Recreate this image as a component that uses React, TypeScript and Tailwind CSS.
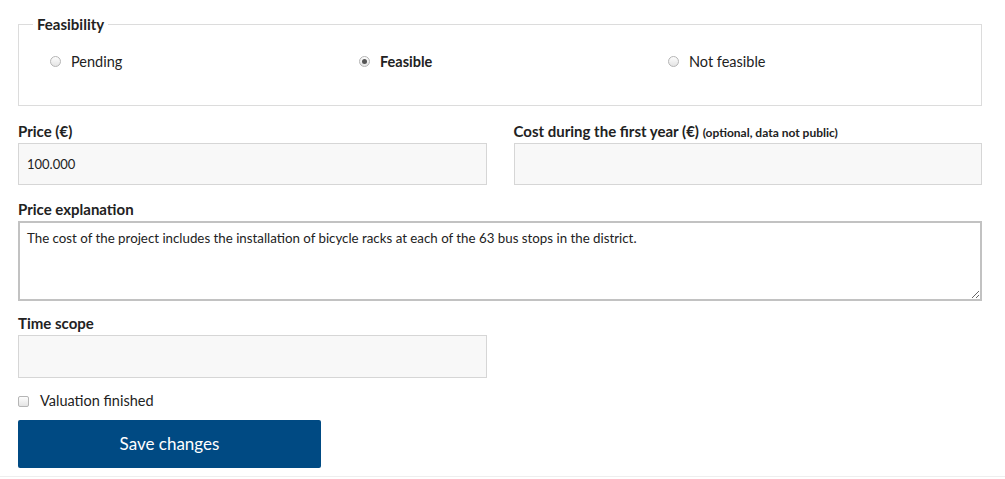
import React, { useState } from 'react';

const font = { fontFamily: 'Lato, "Open Sans", sans-serif' };

const Radio = ({ checked, label }: { checked?: boolean; label: string }) => (
  <label className="flex items-center gap-[10px] w-[309px]">
    <span className="w-[11px] h-[11px] rounded-full border border-[#b5b5b5] bg-gradient-to-b from-[#fdfdfd] to-[#e4e4e4] flex items-center justify-center">
      {checked && <span className="w-[5px] h-[5px] rounded-full bg-[#555]" />}
    </span>
    <span className={`text-[14.5px] text-[#222] ${checked ? 'font-bold' : ''}`}>{label}</span>
  </label>
);

const labelCls = 'block text-[15px] font-bold text-[#222] leading-[20px] h-[20px]';
const inputCls = 'block mt-[2px] w-full bg-[#f8f8f8] border border-[#d6d6d6] px-[8px] text-[13px] text-[#222] outline-none';

const App = () => {
  const [feasibility] = useState('feasible');

  return (
    <div className="bg-white w-[1005px] h-[479px] overflow-hidden" style={font}>
      <div className="pl-[18px] w-[982px] pt-[14px]">
        {/* Feasibility */}
        <fieldset className="border border-[#dcdcdc] h-[92px] p-0 m-0">
          <legend className="px-[4px] ml-[14px] text-[15px] leading-[20px] font-bold text-[#222]">Feasibility</legend>
          <div className="flex mt-[17px] pl-[31px]">
            <Radio label="Pending" checked={feasibility === 'pending'} />
            <Radio label="Feasible" checked={feasibility === 'feasible'} />
            <Radio label="Not feasible" checked={feasibility === 'not'} />
          </div>
        </fieldset>

        {/* Price / cost */}
        <div className="grid grid-cols-2 gap-[27px] mt-[15px]">
          <div>
            <label className={labelCls}>Price (€)</label>
            <input defaultValue="100.000" className={`${inputCls} h-[42px]`} />
          </div>
          <div>
            <label className={labelCls}>
              Cost during the first year (€) <span className="text-[12px] leading-[20px]">(optional, data not public)</span>
            </label>
            <input className={`${inputCls} h-[42px]`} />
          </div>
        </div>

        {/* Explanation */}
        <div className="mt-[14px]">
          <label className={labelCls}>Price explanation</label>
          <textarea
            defaultValue="The cost of the project includes the installation of bicycle racks at each of the 63 bus stops in the district."
            className="mt-[2px] block w-full h-[80px] border-2 border-[#c2c2c2] px-[7px] py-[6px] text-[13.3px] leading-[18px] text-[#222] outline-none resize-y"
          />
        </div>

        {/* Time scope */}
        <div className="mt-[12px] w-[469px]">
          <label className={labelCls}>Time scope</label>
          <input className={`${inputCls} h-[43px]`} />
        </div>

        <label className="flex items-center gap-[11px] mt-[13px] h-[20px]">
          <span className="w-[11px] h-[11px] rounded-[2px] border border-[#b5b5b5] bg-gradient-to-b from-[#fdfdfd] to-[#e4e4e4]" />
          <span className="text-[14.5px] text-[#222]">Valuation finished</span>
        </label>

        <button className="block mt-[9px] w-[303px] h-[48px] bg-[#004a83] rounded-[2px] text-white text-[17px]">
          Save changes
        </button>
      </div>
      <div className="mt-[8px] border-t border-[#eee]" />
    </div>
  );
};

export default App;
